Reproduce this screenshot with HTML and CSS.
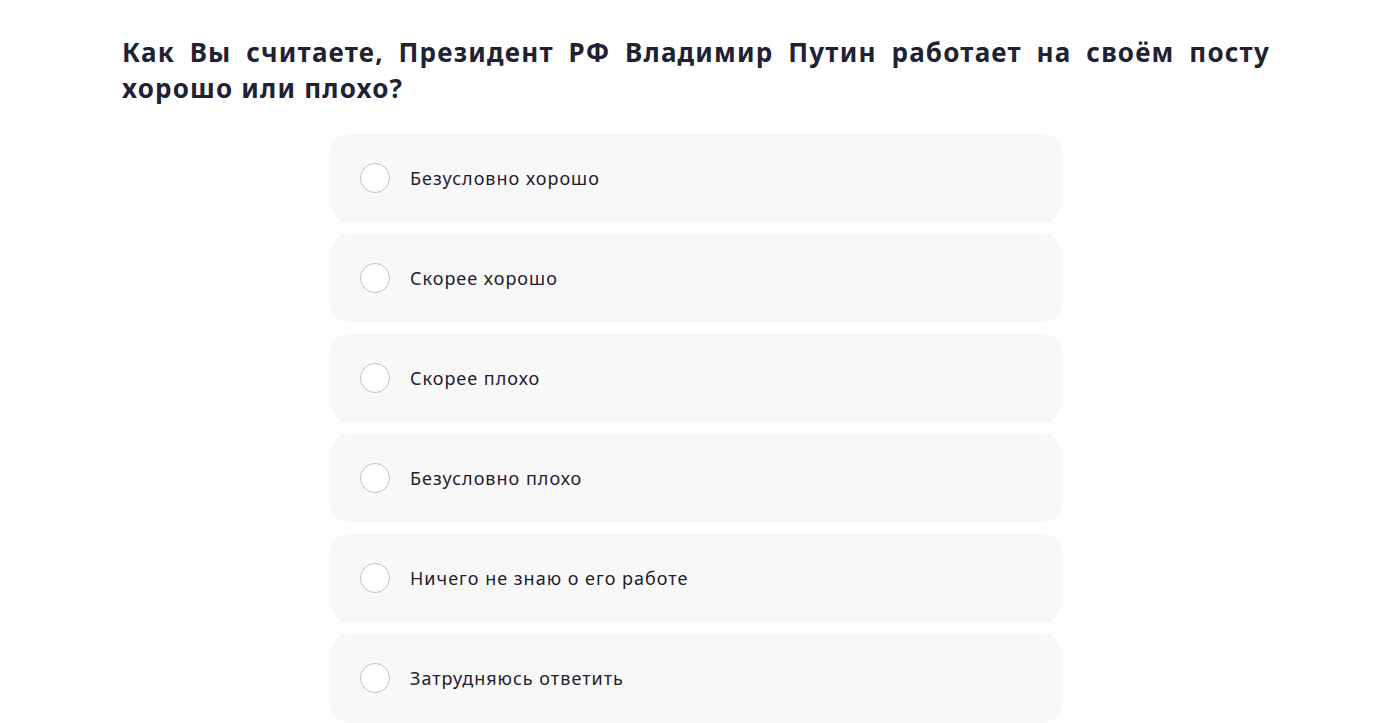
FILE: index.html
```html
<!DOCTYPE html>
<html>
  <head>
    <meta name="viewport" content="width=device-width, initial-scale=1">
    <link rel="stylesheet" href="styles.css">
  </head>
  <body>
    <div class="survey">
      <h2 class="question">Как Вы считаете, Президент РФ Владимир Путин работает на своём посту хорошо или плохо?</h2>

      <div class="answers">
        <label class="answer"><span class="radio"></span><span class="answer-text">Безусловно хорошо</span></label>
        <label class="answer"><span class="radio"></span><span class="answer-text">Скорее хорошо</span></label>
        <label class="answer"><span class="radio"></span><span class="answer-text">Скорее плохо</span></label>
        <label class="answer"><span class="radio"></span><span class="answer-text">Безусловно плохо</span></label>
        <label class="answer"><span class="radio"></span><span class="answer-text">Ничего не знаю о его работе</span></label>
        <label class="answer"><span class="radio"></span><span class="answer-text">Затрудняюсь ответить</span></label>
      </div>
    </div>
  </body>
</html>
```

FILE: styles.css
```css
body {
  margin: 0;
  background: #fff;
  font-family: "Noto Sans", "Open Sans", sans-serif;
  color: #1e2030;
}

/* Page block */
.survey {
  width: 1148px;
  margin-left: 122px;
  padding-top: 34px;
}

/* Question title */
.question {
  margin: 0 0 27px;
  font-size: 26px;
  line-height: 36px;
  font-weight: 700;
  letter-spacing: 1.2px;
  text-align: justify;
  color: #1f2233;
}

/* Answer list */
.answers {
  width: 732px;
  margin: 0 auto;
  display: flex;
  flex-direction: column;
  gap: 10px;
}

.answer {
  height: 90px;
  display: flex;
  align-items: center;
  gap: 20px;
  padding-left: 30px;
  background-color: #f8f8f8;
  border-radius: 20px;
  cursor: pointer;
}

.radio {
  width: 30px;
  height: 30px;
  box-sizing: border-box;
  border: 1px solid #c2c2c2;
  border-radius: 50%;
  background: #fff;
  flex-shrink: 0;
}

.answer-text {
  font-size: 18px;
  letter-spacing: 1px;
  color: #22202e;
}
```
